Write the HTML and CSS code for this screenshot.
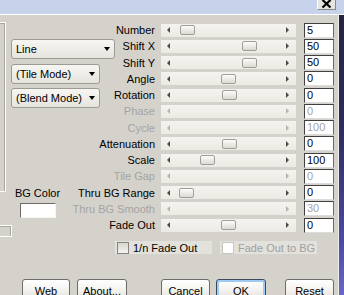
FILE: index.html
```html
<!DOCTYPE html>
<html lang="en">
<head>
  <meta charset="UTF-8" />
  <title>Tile Settings</title>
  <link rel="stylesheet" href="styles.css">
</head>
<body>
  <div class="titlebar">
    <div class="close">
      <svg width="17" height="9" viewBox="0 0 17 9"><path d="M4.5 0 L12.5 7.5 M12.5 0 L4.5 7.5" stroke="#000" stroke-width="2.2" fill="none"/></svg>
    </div>
  </div>

  <div class="frame-row">
    <div class="dialog">
      <div class="content">
        <div class="edge">
          <div class="frame-top"></div>
          <div class="frame-bottom"></div>
        </div>

        <div class="side">
          <div class="select select-wide"><span>Line</span><i class="drop"></i></div>
          <div class="select"><span>(Tile Mode)</span><i class="drop"></i></div>
          <div class="select"><span>(Blend Mode)</span><i class="drop"></i></div>
          <div class="bgcolor">
            <span class="bgcolor-label">BG Color</span>
            <div class="swatch"></div>
          </div>
        </div>

        <div class="params">
          <div class="param">
            <span class="label">Number</span>
            <div class="track"><i class="arrow-l"></i><span class="thumb" style="left:19px"></span><i class="arrow-r"></i></div>
            <span class="value">5</span>
          </div>
          <div class="param">
            <span class="label">Shift X</span>
            <div class="track"><i class="arrow-l"></i><span class="thumb" style="left:81px"></span><i class="arrow-r"></i></div>
            <span class="value">50</span>
          </div>
          <div class="param">
            <span class="label">Shift Y</span>
            <div class="track"><i class="arrow-l"></i><span class="thumb" style="left:81px"></span><i class="arrow-r"></i></div>
            <span class="value">50</span>
          </div>
          <div class="param">
            <span class="label">Angle</span>
            <div class="track"><i class="arrow-l"></i><span class="thumb" style="left:60px"></span><i class="arrow-r"></i></div>
            <span class="value">0</span>
          </div>
          <div class="param">
            <span class="label">Rotation</span>
            <div class="track"><i class="arrow-l"></i><span class="thumb" style="left:61px"></span><i class="arrow-r"></i></div>
            <span class="value">0</span>
          </div>
          <div class="param off">
            <span class="label">Phase</span>
            <div class="track"><i class="arrow-l"></i><i class="arrow-r"></i></div>
            <span class="value">0</span>
          </div>
          <div class="param off">
            <span class="label">Cycle</span>
            <div class="track"><i class="arrow-l"></i><i class="arrow-r"></i></div>
            <span class="value">100</span>
          </div>
          <div class="param">
            <span class="label">Attenuation</span>
            <div class="track"><i class="arrow-l"></i><span class="thumb" style="left:61px"></span><i class="arrow-r"></i></div>
            <span class="value">0</span>
          </div>
          <div class="param">
            <span class="label">Scale</span>
            <div class="track"><i class="arrow-l"></i><span class="thumb" style="left:39px"></span><i class="arrow-r"></i></div>
            <span class="value">100</span>
          </div>
          <div class="param off">
            <span class="label">Tile Gap</span>
            <div class="track"><i class="arrow-l"></i><i class="arrow-r"></i></div>
            <span class="value">0</span>
          </div>
          <div class="param">
            <span class="label">Thru BG Range</span>
            <div class="track"><i class="arrow-l"></i><span class="thumb" style="left:18px"></span><i class="arrow-r"></i></div>
            <span class="value">0</span>
          </div>
          <div class="param off">
            <span class="label">Thru BG Smooth</span>
            <div class="track"><i class="arrow-l"></i><i class="arrow-r"></i></div>
            <span class="value">30</span>
          </div>
          <div class="param">
            <span class="label">Fade Out</span>
            <div class="track"><i class="arrow-l"></i><span class="thumb" style="left:60px"></span><i class="arrow-r"></i></div>
            <span class="value">0</span>
          </div>
        </div>
      </div>

      <div class="checks">
        <label class="check"><span class="box"></span>1/n Fade Out</label>
        <label class="check off"><span class="box"></span>Fade Out to BG</label>
      </div>

      <div class="buttons">
        <button class="btn btn-web">Web</button>
        <button class="btn btn-about">About...</button>
        <button class="btn btn-cancel">Cancel</button>
        <button class="btn btn-ok">OK</button>
        <button class="btn btn-reset">Reset</button>
      </div>
    </div>
    <div class="desktop"></div>
  </div>
</body>
</html>
```

FILE: styles.css
```css
body {
  margin: 0;
  width: 344px;
  height: 295px;
  overflow: hidden;
  background: #d5d2cc;
  font-family: "Liberation Sans", Arial, sans-serif;
  font-size: 11px;
  color: #000;
}
.titlebar {
  height: 14px;
  background: #c7d3ea;
  border-bottom: 1px solid #fff;
  display: flex;
  justify-content: flex-end;
}
.close {
  width: 17px;
  height: 9px;
  margin-right: 8px;
  background: #e6e4de;
  border: 1px solid #8a8882;
  border-top: none;
  border-left-color: #fff;
}
.close svg {
  display: block;
}
.frame-row {
  display: flex;
  height: 280px;
}
.dialog {
  flex: 1;
}
.desktop {
  width: 5px;
  border-left: 1px solid #efeee9;
  background: linear-gradient(#24243e, #2c2c5e 40%, #4a4aa2 80%, #6868c4);
}
.content {
  display: flex;
}
.edge {
  width: 11px;
  flex: none;
  display: flex;
  flex-direction: column;
  align-items: flex-start;
}
.frame-top {
  box-sizing: border-box;
  margin-top: 7px;
  width: 6px;
  height: 170px;
  border: 1px solid #fff;
  border-left: none;
  box-shadow: inset -1px 1px 0 #a9a69f;
}
.frame-bottom {
  box-sizing: border-box;
  margin-top: 33px;
  width: 12px;
  height: 12px;
  border: 1px solid #fff;
  border-left: none;
  box-shadow: inset -1px 1px 0 #a9a69f;
}
.side {
  width: 104px;
  flex: none;
  display: flex;
  flex-direction: column;
  align-items: flex-start;
  gap: 4.5px;
  padding-top: 24px;
}
.select {
  box-sizing: border-box;
  width: 89px;
  height: 20px;
  display: flex;
  align-items: center;
  justify-content: space-between;
  padding: 0 4px;
  border: 1px solid #9d9b96;
  border-radius: 3px;
  background: linear-gradient(#f7f6f2, #e6e4de);
}
.select-wide {
  width: 104px;
}
.drop {
  width: 0;
  height: 0;
  border-top: 4px solid #000;
  border-left: 3.5px solid transparent;
  border-right: 3.5px solid transparent;
}
.bgcolor {
  margin: 74px 0 0 4px;
  width: 45px;
  display: flex;
  flex-direction: column;
  align-items: center;
  gap: 3.5px;
}
.bgcolor-label {
  line-height: 13px;
  white-space: nowrap;
}
.swatch {
  box-sizing: border-box;
  width: 36px;
  height: 15px;
  background: #fff;
  border: 1px solid;
  border-color: #6d6b66 #f4f4f2 #f4f4f2 #6d6b66;
}
.params {
  margin: 7px 0 0 -45px;
  display: flex;
  flex-direction: column;
}
.param {
  height: 16.25px;
  display: flex;
  align-items: center;
}
.label {
  width: 85px;
  flex: none;
  text-align: right;
  white-space: nowrap;
}
.track {
  position: relative;
  box-sizing: border-box;
  width: 135px;
  height: 13px;
  margin-left: 6px;
  display: flex;
  align-items: center;
  justify-content: space-between;
  padding: 0 7px 0 6px;
  background: linear-gradient(#f4f3ef, #ebeae4);
}
.arrow-l {
  width: 0;
  height: 0;
  border-style: solid;
  border-width: 3px 3px 3px 0;
  border-color: transparent #4a4a4a transparent transparent;
}
.arrow-r {
  width: 0;
  height: 0;
  border-style: solid;
  border-width: 3px 0 3px 3px;
  border-color: transparent transparent transparent #4a4a4a;
}
.thumb {
  position: absolute;
  top: 1.5px;
  box-sizing: border-box;
  width: 15px;
  height: 10px;
  border: 1px solid #a09e98;
  border-radius: 2px;
  background: linear-gradient(#fcfcfa, #dcdad4);
}
.value {
  box-sizing: border-box;
  width: 30px;
  height: 15px;
  margin-left: 8px;
  padding-left: 2px;
  line-height: 13px;
  background: #fff;
  border: 1px solid;
  border-color: #404040 #6a6a6a #dcdcdc #404040;
}
.param.off .label,
.param.off .value {
  color: #a4a4a4;
}
.param.off .arrow-l {
  border-right-color: #b4b4b4;
}
.param.off .arrow-r {
  border-left-color: #b4b4b4;
}
.checks {
  display: flex;
  gap: 8px;
  margin: 4px 0 0 115px;
}
.check {
  box-sizing: border-box;
  width: 97px;
  height: 13px;
  display: flex;
  align-items: center;
  gap: 4px;
  padding-left: 2px;
  background: #e3e1db;
  white-space: nowrap;
}
.box {
  box-sizing: border-box;
  width: 12px;
  height: 12px;
  border: 1px solid #858480;
  background: linear-gradient(#d8d6d0, #f4f3f0);
}
.check.off {
  color: #a0a0a0;
}
.check.off .box {
  border-color: #c7c5c0;
  background: #fff;
}
.buttons {
  display: flex;
  margin: 25px 0 0 22px;
}
.btn {
  box-sizing: border-box;
  width: 49px;
  height: 23px;
  padding: 0;
  border: 1px solid #6c6c6c;
  border-radius: 3px;
  background: linear-gradient(#ffffff, #f3f2ee 50%, #dedbd4);
  font-family: inherit;
  font-size: 11px;
  color: #000;
}
.btn-web {
  width: 48px;
}
.btn-about {
  width: 50px;
  margin-left: 7px;
}
.btn-cancel {
  margin-left: 34px;
}
.btn-ok {
  width: 50px;
  margin-left: 6px;
  border-color: #3c4a5c;
  box-shadow: inset 0 0 0 2px #9fcbf3;
}
.btn-reset {
  margin-left: 19px;
}
```
